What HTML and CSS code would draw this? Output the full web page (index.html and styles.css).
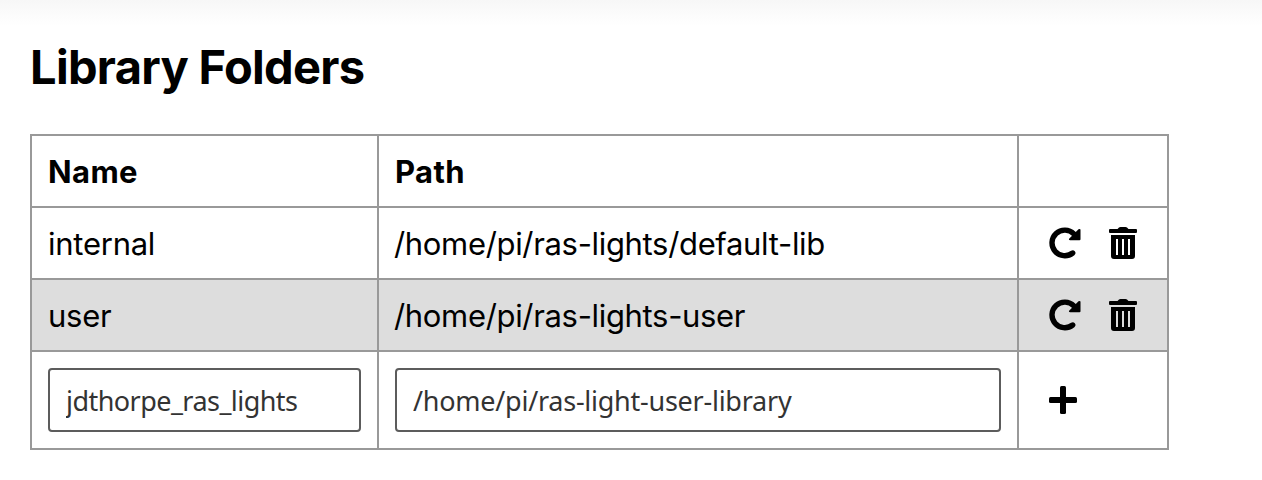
FILE: index.html
```
<!DOCTYPE html>
<html lang="en">
<head>
<meta charset="utf-8">
<title>Library Folders</title>
<link rel="stylesheet" href="styles.css">
</head>
<body>
<svg class="symbols" aria-hidden="true">
  <symbol id="reload" viewBox="0 0 32 32"><path class="arc" d="M24.850 6.850A12.800 12.800 0 1 0 23.700 26"/><path d="M29.500 2.300Q31.500 1.400 31.500 3V12.200Q31.500 13.200 30.500 13.200H21.200Q19.200 13.200 20.300 11.500Z"/></symbol>
  <symbol id="trash" viewBox="0 0 28 32"><path fill-rule="evenodd" d="M1 2H8.500L10 .6Q10.500 0 11.500 0H16.500Q17.500 0 18 .6L19.500 2H27Q28 2 28 3V5Q28 6 27 6H1Q0 6 0 5V3Q0 2 1 2ZM2 8H26V29Q26 32 23 32H5Q2 32 2 29ZM7 12V28H9V12ZM13 12V28H15V12ZM19 12V28H21V12Z"/></symbol>
</svg>
<main class="page">
  <h1 class="title">Library Folders</h1>
  <table class="folders">
    <colgroup><col class="col-name"><col class="col-path"><col class="col-actions"></colgroup>
    <tr class="row"><th>Name</th><th>Path</th><th></th></tr>
    <tr class="row"><td>internal</td><td class="path">/home/pi/ras-lights/default-lib</td><td><div class="actions"><svg class="icon reload"><use href="#reload"/></svg><svg class="icon trash"><use href="#trash"/></svg></div></td></tr>
    <tr class="row shaded"><td>user</td><td class="path">/home/pi/ras-lights-user</td><td><div class="actions"><svg class="icon reload"><use href="#reload"/></svg><svg class="icon trash"><use href="#trash"/></svg></div></td></tr>
    <tr class="row form"><td><input class="field name-field" value="jdthorpe_ras_lights"></td><td><input class="field" value="/home/pi/ras-light-user-library"></td><td><div class="actions"><svg class="icon plus" viewBox="0 0 28 28"><rect x="11" width="6" height="28" rx="1.500"/><rect y="11" width="28" height="6" rx="1.500"/></svg></div></td></tr>
  </table>
</main>
</body>
</html>
```
FILE: styles.css
```
body { margin: 0; background: #fff; color: #000; font-family: Inter, sans-serif; }
.symbols { display: none; }
.page { height: 480px; box-sizing: border-box; padding: 37px 30px 0; background: linear-gradient(#f7f7f7, #fff 26px); }
.title { margin: 0 0 38px; font-size: 47px; line-height: 59px; font-weight: 700; letter-spacing: -0.7px; }
.folders { width: 1139px; table-layout: fixed; border-collapse: collapse; }
.col-name { width: 347px; }
.col-path { width: 640px; }
.col-actions { width: 150px; }
.row { height: 72px; }
.row th, .row td { border: 2px solid #999; padding: 0 16px; text-align: left; line-height: 40px; font-size: 31px; letter-spacing: -0.25px; }
.row th:not(:last-child), .row td:not(:last-child) { padding-top: 1px; }
.row th { font-weight: 700; letter-spacing: 0.4px; }
.row .path { padding-left: 15px; letter-spacing: -0.33px; }
.shaded { background: #ddd; }
.form { height: 98px; }
.row.form td { padding-top: 0; }
.field { display: block; box-sizing: border-box; width: 100%; height: 64px; padding: 1px 16px; border: 2px solid #5c5c5c; border-radius: 4px; background: #fff; color: #333; font: 27px "Noto Sans", sans-serif; letter-spacing: -0.25px; }
.name-field { letter-spacing: -0.55px; }
.actions { display: flex; align-items: center; gap: 28px; padding-left: 14px; }
.icon { display: block; flex: none; }
.reload { width: 32px; height: 32px; }
.arc { fill: none; stroke: #000; stroke-width: 5.4; stroke-linecap: round; }
.trash { width: 28px; height: 32px; }
.plus { width: 28px; height: 28px; }
```
